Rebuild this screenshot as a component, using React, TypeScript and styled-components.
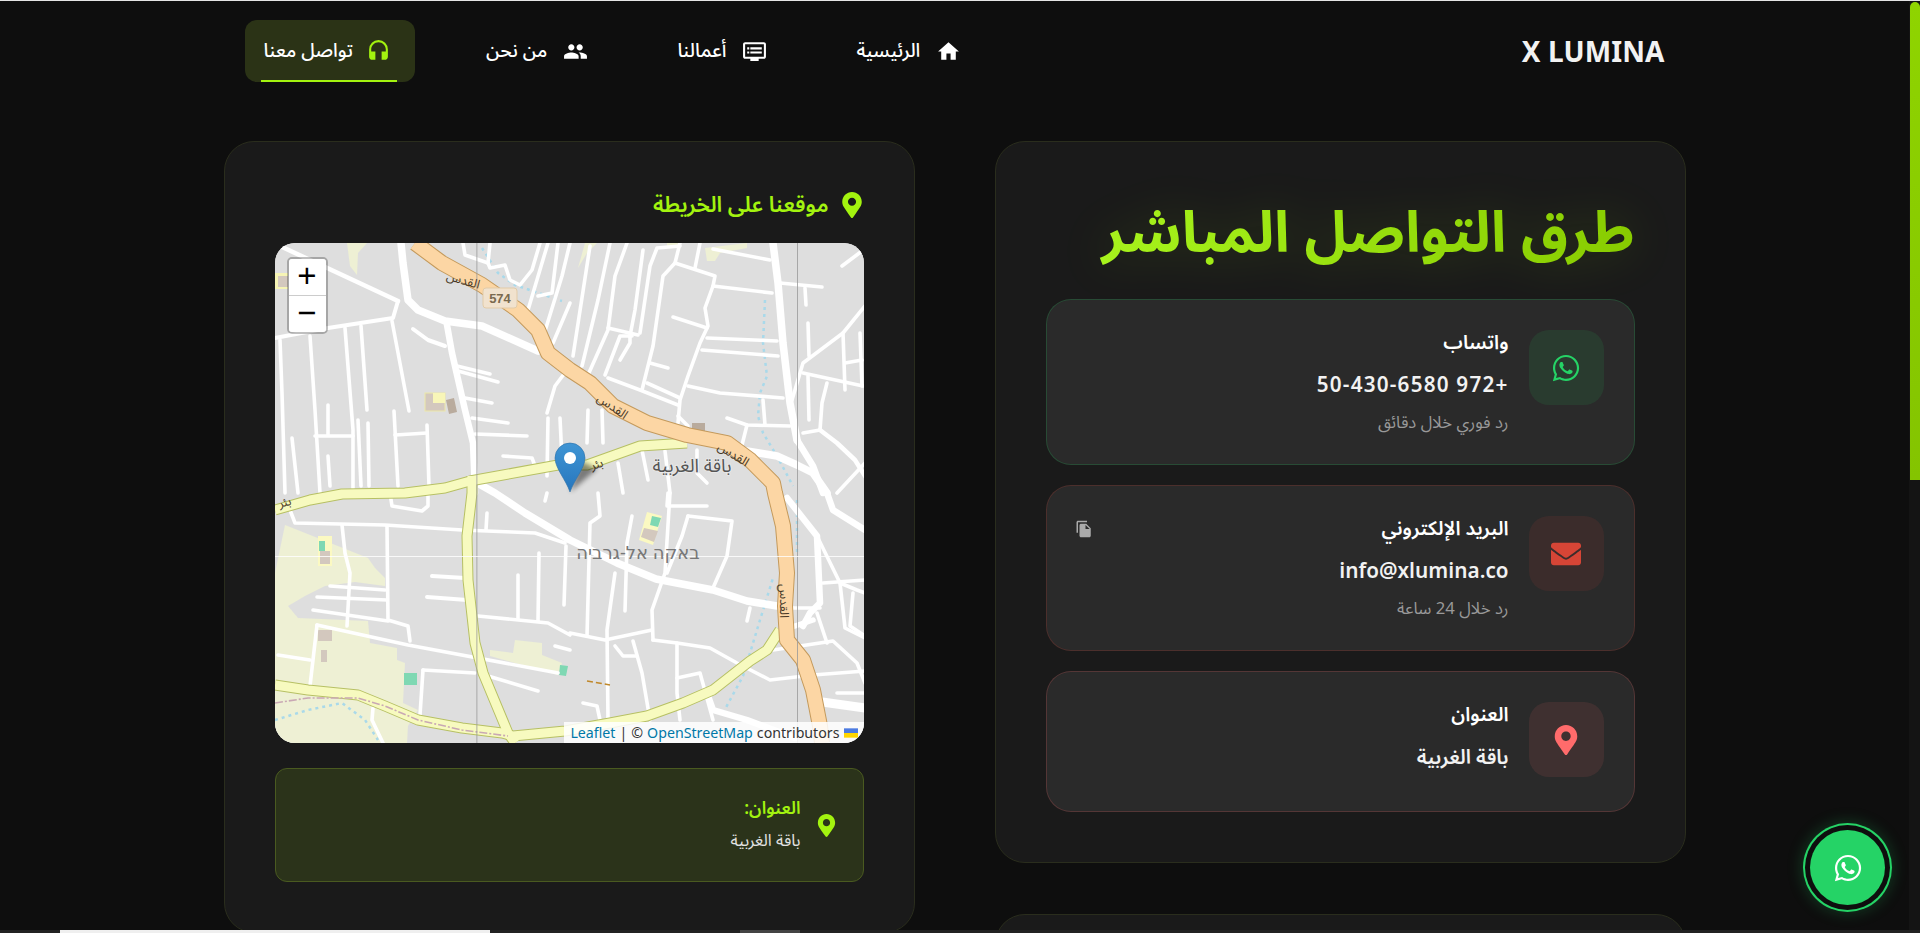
import { ReactNode } from "react";
import styled, { createGlobalStyle } from "styled-components";
import {
  MdHome,
  MdDvr,
  MdPeople,
  MdHeadset,
  MdFileCopy,
} from "react-icons/md";
import { FaWhatsapp, FaEnvelope, FaMapMarkerAlt } from "react-icons/fa";

const LIME = "#a3f30f";
const FONT = `"Noto Sans Arabic", "IBM Plex Sans Arabic", "Noto Sans", "DejaVu Sans", sans-serif`;

const GlobalStyle = createGlobalStyle`
  html, body {
    margin: 0;
    height: 100%;
    overflow: hidden;
    background: #0e0e0e;
  }
  * {
    box-sizing: border-box;
  }
`;

const Frame = styled.div`
  position: relative;
  height: 933px;
  display: flex;
  flex-direction: column;
  overflow: hidden;
  background: #0e0e0e;
  color: #fff;
  font-family: ${FONT};
`;

const TopLine = styled.div`
  height: 1px;
  flex: none;
  background: #e4e4e4;
`;

const Middle = styled.div`
  flex: 1;
  min-height: 0;
  display: flex;
  direction: ltr;
`;

const Page = styled.div`
  flex: 1;
  min-width: 0;
  overflow: hidden;
  direction: rtl;
`;

const Wrap = styled.div`
  width: 1462px;
  margin: 0 auto;
`;

const ScrollTrack = styled.div`
  width: 11px;
  flex: none;
  background: #141414;
  padding-top: 1px;
`;

const ScrollThumb = styled.div`
  width: 10px;
  height: 478px;
  margin-left: 1px;
  border-radius: 5px 5px 0 0;
  background: linear-gradient(180deg, #8fd400, #84c400);
`;

const BottomBar = styled.div`
  height: 3px;
  flex: none;
  display: flex;
  background: #222;
  direction: ltr;
`;

const BarPiece = styled.div<{ $left: number; $width: number; $color: string }>`
  margin-left: ${(p) => p.$left}px;
  width: ${(p) => p.$width}px;
  background: ${(p) => p.$color};
`;

const Header = styled.header`
  display: flex;
  align-items: center;
  justify-content: space-between;
  padding: 19px 21px;
  margin-bottom: 40px;
`;

const Logo = styled.div`
  font-family: "Noto Sans", sans-serif;
  font-size: 28px;
  font-weight: 700;
  letter-spacing: 0.1px;
  color: #f2f2f2;
  direction: ltr;
`;

const Nav = styled.nav`
  display: flex;
  gap: 44px;
`;

const NavItem = styled.a<{ $active?: boolean }>`
  position: relative;
  height: 62px;
  display: flex;
  align-items: center;
  gap: ${(p) => (p.$active ? 13 : 16)}px;
  padding: 0 ${(p) => (p.$active ? 24 : 28)}px 0 ${(p) => (p.$active ? 19 : 17)}px;
  margin-right: ${(p) => (p.$active ? 10 : 0)}px;
  border-radius: 12px;
  font-size: 19px;
  font-weight: 500;
  color: #fff;
  background: ${(p) => (p.$active ? "#2b3316" : "transparent")};
  svg {
    font-size: 25px;
    color: ${(p) => (p.$active ? LIME : "#fff")};
  }
  ${(p) =>
    p.$active &&
    `&::after {
      content: "";
      position: absolute;
      left: 16px;
      right: 18px;
      bottom: 0;
      height: 2px;
      background: ${LIME};
    }`}
`;

const Columns = styled.main`
  display: grid;
  grid-template-columns: 691px 691px;
  justify-content: space-between;
  align-items: start;
`;

const Panel = styled.section`
  background: #1a1a1a;
  border: 1px solid #2a2d1d;
  border-radius: 30px;
  padding: 50px;
`;

const RightStack = styled.div`
  display: flex;
  flex-direction: column;
  gap: 51px;
`;

const MainTitle = styled.h1`
  margin: 0 0 23px;
  font-size: 57px;
  line-height: 84px;
  font-weight: 700;
  background: linear-gradient(90deg, #aaf71f, #88cc00);
  -webkit-background-clip: text;
  background-clip: text;
  color: transparent;
  filter: drop-shadow(0 0 24px rgba(163, 243, 15, 0.16));
`;

const ContactList = styled.div`
  display: flex;
  flex-direction: column;
  gap: 20px;
`;

const ContactCard = styled.div<{ $color: string }>`
  position: relative;
  display: flex;
  align-items: flex-start;
  gap: 20px;
  padding: 30px;
  background: #2a2a2a;
  border: 1px solid ${(p) => p.$color}33;
  border-radius: 25px;
`;

const IconBox = styled.div<{ $color: string }>`
  width: 75px;
  height: 75px;
  flex: none;
  display: flex;
  align-items: center;
  justify-content: center;
  border-radius: 20px;
  background: ${(p) => p.$color}1a;
  color: ${(p) => p.$color};
  font-size: 30px;
`;

const CardText = styled.div`
  display: flex;
  flex-direction: column;
`;

const CardTitle = styled.div`
  font-size: 19.5px;
  line-height: 26px;
  font-weight: 600;
  color: #fff;
  margin-bottom: 15px;
`;

const CardValue = styled.div<{ $latin?: boolean; $tracking?: number }>`
  font-size: ${(p) => (p.$latin ? 20.7 : 20)}px;
  line-height: 30px;
  font-weight: 600;
  letter-spacing: ${(p) => p.$tracking ?? 0}px;
  color: #f2f2f2;
  margin-bottom: 10px;
  &:last-child {
    margin-bottom: 8px;
  }
`;

const CardNote = styled.div`
  font-size: 16.7px;
  line-height: 23px;
  color: #999;
`;

const CopyButton = styled.span`
  position: absolute;
  left: 28px;
  top: 34px;
  display: flex;
  font-size: 18px;
  color: #aaa;
`;

const SectionTitle = styled.h2`
  margin: 0 0 26px;
  display: flex;
  align-items: center;
  gap: 10px;
  height: 25px;
  font-size: 21.6px;
  font-weight: 600;
  color: ${LIME};
  svg {
    font-size: 26px;
    margin-right: -1px;
  }
`;

const MapBox = styled.div`
  position: relative;
  height: 500px;
  border-radius: 20px;
  overflow: hidden;
  background: #dedede;
  direction: ltr;
`;

const MapSvg = styled.svg`
  display: block;
  width: 100%;
  height: 100%;
`;

const ZoomControl = styled.div`
  position: absolute;
  left: 12px;
  top: 14px;
  width: 41px;
  display: flex;
  flex-direction: column;
  border: 2px solid rgba(0, 0, 0, 0.25);
  border-radius: 5px;
  background-clip: padding-box;
`;

const ZoomButton = styled.a`
  height: 36px;
  display: flex;
  align-items: center;
  justify-content: center;
  padding-top: 3px;
  background: #fff;
  color: #000;
  font-family: "Liberation Mono", monospace;
  font-size: 33px;
  font-weight: 400;
  line-height: 33px;
  &:first-child {
    border-bottom: 1px solid #ccc;
    border-radius: 3px 3px 0 0;
    height: 37px;
  }
  &:last-child {
    border-radius: 0 0 3px 3px;
  }
`;

const Attribution = styled.div`
  position: absolute;
  right: 0;
  bottom: 0;
  height: 21px;
  display: flex;
  align-items: center;
  gap: 4px;
  padding: 0 6px;
  background: rgba(255, 255, 255, 0.85);
  font-family: "Noto Sans", sans-serif;
  font-size: 14.2px;
  color: #333;
  white-space: nowrap;
`;

const AttrLink = styled.a`
  color: #0078a8;
`;

const Flag = styled.svg`
  width: 14px;
  height: 10px;
`;

const AddressBox = styled.div`
  margin-top: 25px;
  height: 114px;
  display: flex;
  align-items: center;
  gap: 14px;
  padding: 0 25px;
  background: #2b331a;
  border: 1px solid #4a5a20;
  border-radius: 12px;
  > svg {
    font-size: 23px;
    color: ${LIME};
  }
`;

const AddressLabel = styled.div`
  font-size: 17.5px;
  line-height: 24px;
  font-weight: 600;
  color: ${LIME};
  margin-bottom: 8px;
`;

const AddressText = styled.div`
  font-size: 16.4px;
  line-height: 24px;
  color: #e2e2e2;
`;

const FloatButton = styled.a`
  position: absolute;
  left: 1810px;
  top: 830px;
  width: 75px;
  height: 75px;
  display: flex;
  align-items: center;
  justify-content: center;
  border-radius: 50%;
  background: #25d366;
  color: #fff;
  font-size: 30px;
  box-shadow: 0 0 0 5px #0e0e0e, 0 0 0 7px #25d366, 0 0 16px 7px rgba(37, 211, 102, 0.25);
`;

// map traced from the tile picture, coordinates are inside the 589x500 box
type Road = [number, string];

const areas: string[] = [
  "0,330 10,282 93,315 100,325 110,335 110,343 80,339 50,343 30,353 13,363 23,375 93,378 95,400 122,405 122,417 130,420 128,460 143,467 133,483 132,500 0,500",
  "215,407 238,410 240,397 267,400 267,412 287,420 283,432 215,413",
  "72,0 92,0 83,10 82,32 75,23",
  "430,5 472,0 472,5 445,10 440,18 432,18",
  "392,0 405,0 405,5 392,3",
  "303,25 310,0 322,0 312,10",
];

const whiteRoads: Road[] = [
  [7.5, "126,0 128,20 133,57 143,67 170,78 207,83 263,108"],
  [4.5, "5,3 123,58"],
  [4, "0,95 53,85 118,75 123,58"],
  [3.6, "117,78 134,168"],
  [6.5, "172,82 177,110 190,167 198,200 200,250"],
  [4, "138,86 153,97 170,103"],
  [3.6, "182,123 215,131"],
  [3.6, "183,128 223,139"],
  [3.6, "190,155 217,160"],
  [3.6, "197,175 233,180"],
  [3.6, "200,191 252,193"],
  [3.6, "5,97 7,150 10,250"],
  [3.6, "35,93 40,167 45,250"],
  [3.6, "70,85 78,187 78,245"],
  [3.6, "86,83 92,167"],
  [3.6, "53,162 53,192"],
  [3.6, "40,193 78,193"],
  [3.6, "83,177 86,243"],
  [3.6, "93,180 94,243"],
  [3.6, "119,168 123,243"],
  [3.6, "120,192 152,190"],
  [3.6, "152,182 154,243"],
  [3.6, "17,195 23,250"],
  [3.6, "53,213 55,243"],
  [3.6, "228,213 257,215 260,223"],
  [3.6, "273,175 272,233"],
  [3.6, "285,175 287,217"],
  [3.6, "272,170 280,143 295,123"],
  [3.6, "188,0 190,12 213,20 215,25 230,22 235,37 245,42 257,27 265,0"],
  [3.6, "215,0 213,20"],
  [3.6, "253,67 267,20 273,0"],
  [3.6, "263,53 277,50 283,0"],
  [3.6, "270,88 287,33 295,0"],
  [3.6, "278,100 295,60"],
  [3.6, "298,113 315,3"],
  [3.6, "307,123 323,57 335,0"],
  [3.6, "313,132 333,87 340,33 352,0"],
  [3.6, "355,93 360,67 368,7"],
  [3.6, "365,90 375,23 382,5 405,3"],
  [3.6, "333,85 363,92"],
  [3.6, "330,132 345,93 357,93"],
  [3.6, "345,117 355,100 355,93"],
  [3.6, "333,135 365,147 403,162"],
  [3.6, "367,147 378,103 388,33 400,20 440,33 438,43 430,65 433,83 425,100 413,133 405,157 403,180"],
  [3.6, "400,20 405,0"],
  [3.6, "420,25 425,0"],
  [3.6, "438,43 497,50"],
  [3.6, "398,74 432,85"],
  [3.6, "432,95 502,98"],
  [3.6, "427,107 503,113"],
  [3.6, "375,120 393,125"],
  [3.6, "372,140 405,155"],
  [3.6, "413,143 445,150 508,155"],
  [7.5, "498,0 503,40 508,100 515,160 522,197"],
  [3.6, "438,6 495,17"],
  [3.6, "505,40 547,44"],
  [3.6, "530,45 531,62"],
  [3.6, "567,23 587,8"],
  [3.6, "533,80 534,113"],
  [3.6, "517,157 528,120 568,90 590,63"],
  [3.6, "568,90 570,147"],
  [3.6, "570,120 587,117"],
  [3.6, "585,90 587,143"],
  [3.6, "528,130 588,143"],
  [3.6, "533,133 534,177"],
  [3.6, "552,140 547,160 545,187 528,190"],
  [4.5, "545,187 562,200 580,217 590,233"],
  [3.6, "562,250 590,220"],
  [3.6, "452,175 472,182 515,183"],
  [3.6, "488,157 490,182"],
  [3.6, "472,182 467,202"],
  [7.5, "472,208 502,213 522,222 538,230 552,250"],
  [6.5, "522,197 538,223 548,250"],
  [3.6, "403,173 413,183"],
  [3.6, "422,207 422,230 432,240"],
  [3.6, "390,208 395,250"],
  [3.6, "367,207 373,237"],
  [3.6, "343,220 348,250"],
  [3.6, "327,167 328,200"],
  [3.6, "313,167 312,200"],
  [3.6, "115,250 117,263 147,268 153,263 153,250"],
  [3.6, "15,267 20,280 110,282 187,287 260,290 290,300"],
  [3.6, "212,270 211,287"],
  [3.6, "67,282 70,310 75,330 72,383"],
  [3.6, "112,283 113,377 133,383 135,398"],
  [3.6, "55,343 110,347"],
  [3.6, "42,354 112,357"],
  [3.6, "38,367 113,378"],
  [3.6, "42,382 133,402 283,430"],
  [3.6, "42,382 35,443"],
  [3.6, "3,412 35,417"],
  [3.6, "148,427 200,430"],
  [3.6, "148,427 145,472"],
  [3.6, "213,433 263,448"],
  [4, "157,333 190,335"],
  [4, "152,354 192,357"],
  [3.6, "203,373 273,380 295,392"],
  [3.6, "243,332 243,375"],
  [3.6, "264,310 263,378"],
  [3.6, "280,403 295,407"],
  [3.6, "291,303 289,362"],
  [3.6, "98,465 97,477 108,500"],
  [7.5, "197,237 220,250 250,270 295,297 342,320 381,336 438,347 472,358 502,363"],
  [3.6, "515,365 545,365"],
  [3.6, "272,250 270,258"],
  [3.6, "393,250 392,263 432,263"],
  [3.6, "323,250 325,273 315,280 312,393"],
  [3.6, "357,273 352,300 350,368"],
  [3.6, "395,250 390,330 377,367 378,397"],
  [3.6, "413,273 457,278 452,313 438,345"],
  [3.6, "413,273 407,293 392,330"],
  [3.6, "340,330 332,387 333,477"],
  [3.6, "295,390 330,397 377,387"],
  [3.6, "340,403 348,413 362,413"],
  [3.6, "358,398 367,430 375,477"],
  [3.6, "378,397 402,400 435,405 462,420 495,437 538,432 590,428"],
  [3.6, "402,400 402,450 405,477"],
  [3.6, "402,435 425,430 438,477"],
  [3.6, "475,365 472,378"],
  [3.6, "498,407 525,403 558,398 582,420 590,440"],
  [9, "540,458 590,465"],
  [6.5, "432,450 438,467 472,477 520,495"],
  [3.6, "308,460 322,463 325,477"],
  [6.5, "512,255 542,293 545,360 535,370 528,383"],
  [6.5, "552,250 558,267 590,287"],
  [3.6, "542,293 565,340 582,347 590,350"],
  [3.6, "565,340 570,385 590,395"],
  [3.6, "548,340 590,337"],
  [3.6, "578,350 575,383 590,393"],
  [3.6, "542,370 552,400"],
  [3.6, "562,450 590,450"],
  [5.5, "508,387 538,377"],
];

const orangeRoad =
  "140,0 167,20 207,42 243,67 263,87 273,110 295,127 315,140 338,163 372,180 412,192 452,200 475,217 498,240 500,250 508,283 512,330 510,363 512,397 528,417 538,447 545,483 547,500";

const yellowRoads: string[] = [
  "0,267 35,257 67,251 130,250 170,245 195,238 283,222 312,222 365,203 412,200",
  "197,233 197,250 192,293 193,337 200,400 208,430 233,490 240,500",
  "0,442 33,447 83,452 110,463 143,477 187,485 227,490 238,493 290,488 335,480 372,473 408,460 438,447 475,418 492,407 505,387",
];

const streams: string[] = [
  "490,57 488,100 492,133 485,150 483,173 488,190 502,213 518,243",
  "207,5 223,30 240,42 287,58",
  "0,477 33,467 67,460 90,477 103,497",
  "448,470 468,433 485,377 498,335",
  "522,257 522,313",
];

const roadLabels: [string, number, number, number][] = [
  ["القدس", 188, 38, 16],
  ["القدس", 337, 164, 35],
  ["القدس", 458, 212, 32],
  ["القدس", 508, 358, 90],
  ["بئر", 10, 260, -15],
  ["بئر", 322, 222, -17],
];

function MapPicture() {
  return (
    <MapSvg viewBox="0 0 589 500">
      <defs>
        <linearGradient id="pin" x1="0" y1="0" x2="0" y2="1">
          <stop offset="0" stopColor="#3f95d4" />
          <stop offset="1" stopColor="#2776bd" />
        </linearGradient>
        <filter id="soft" x="-30%" y="-30%" width="160%" height="160%">
          <feGaussianBlur stdDeviation="2.5" />
        </filter>
        <filter id="tile">
          <feGaussianBlur stdDeviation="0.35" />
        </filter>
      </defs>
      <rect width="589" height="500" fill="#dedede" />
      <g filter="url(#tile)">
        {areas.map((pts) => (
          <polygon key={pts} points={pts} fill="#eef0d4" />
        ))}
        <g fill="none" strokeDasharray="3 4" strokeWidth="2.5" stroke="#a9d9ea">
          {streams.map((pts) => (
            <polyline key={pts} points={pts} />
          ))}
        </g>
        <g fill="#d3c8be">
          <rect x="150" y="150" width="20" height="18" stroke="#eee9a8" />
          <rect x="158" y="150" width="12" height="10" fill="#f8f6b8" />
          <polygon points="171,157 179,155 182,169 174,171" fill="#b9ab9d" />
          <rect x="0" y="30" width="13" height="16" fill="#f6f4b5" />
          <rect x="3" y="33" width="10" height="11" />
          <rect x="417" y="180" width="13" height="9" fill="#b9ab9d" />
          <rect x="43" y="293" width="14" height="30" fill="#fbf9c2" />
          <rect x="44" y="298" width="6" height="10" fill="#7fd8b3" />
          <rect x="45" y="308" width="10" height="13" />
          <rect x="43" y="387" width="14" height="11" />
          <rect x="46" y="407" width="6" height="12" />
          <rect x="129" y="430" width="13" height="12" fill="#7fd8b3" />
          <polygon points="285,422 293,423 291,433 284,432" fill="#7fd8b3" />
          <polygon points="372,269 387,273 378,302 364,297" fill="#fbf9c2" />
          <polygon points="377,273 386,275 383,284 375,282" fill="#7fd8b3" />
          <polygon points="369,285 383,288 379,299 366,294" />
        </g>
        <g fill="none" stroke="#fff" strokeLinecap="round" strokeLinejoin="round">
          {whiteRoads.map(([w, pts]) => (
            <polyline key={pts} points={pts} strokeWidth={w} />
          ))}
        </g>
        <g fill="none" strokeLinejoin="round">
          {yellowRoads.map((pts) => (
            <polyline key={pts} points={pts} stroke="#b7c064" strokeWidth="11" />
          ))}
          {yellowRoads.map((pts) => (
            <polyline key={pts} points={pts} stroke="#f7fabf" strokeWidth="9" />
          ))}
          <polyline
            points="0,460 33,455 83,455 110,463 143,477 187,487 233,493"
            stroke="#c9a8b4"
            strokeWidth="1.6"
            strokeDasharray="8 2 2 2"
          />
          <polyline points={orangeRoad} stroke="#c49a5c" strokeWidth="16" />
          <polyline points={orangeRoad} stroke="#fcd6a4" strokeWidth="14" />
          <polyline points="312,438 335,442" stroke="#c0882a" strokeWidth="1.6" strokeDasharray="6 3" />
        </g>
      </g>
      <rect x="201.5" width="0.8" height="500" fill="#999" />
      <rect x="522" width="0.8" height="500" fill="#999" />
      <rect y="313" width="589" height="0.8" fill="#fff" />

      <rect x="208" y="45" width="34" height="20" rx="3" fill="#f1e2ce" stroke="#e2cba8" />
      <text x="225" y="60" textAnchor="middle" fontFamily="Liberation Sans, sans-serif" fontSize="13" fontWeight="700" fill="#7a6a50">
        574
      </text>
      {roadLabels.map(([label, x, y, angle]) => (
        <text
          key={`${x}-${y}`}
          x={x}
          y={y}
          textAnchor="middle"
          dominantBaseline="middle"
          fontFamily={FONT}
          fontSize="12.5"
          fill="#4a3a28"
          transform={`rotate(${angle} ${x} ${y})`}
        >
          {label}
        </text>
      ))}
      <text x="417" y="229" textAnchor="middle" fontFamily={FONT} fontSize="18.5" fill="#555" stroke="#e8e8e8" strokeWidth="2" paintOrder="stroke">
        باقة الغربية
      </text>
      <text x="363" y="316" textAnchor="middle" fontFamily={FONT} fontSize="18" fill="#777">
        באקה אל-גרביה
      </text>

      <polygon points="295,249 322,226 306,218" fill="#000" opacity="0.45" filter="url(#soft)" />
      <path
        d="M295 249 C291 237 280 225 280 215 A15 15 0 0 1 310 215 C310 225 299 237 295 249 Z"
        fill="url(#pin)"
        stroke="#2a6ea8"
        strokeWidth="0.6"
      />
      <circle cx="295" cy="215" r="6" fill="#fff" />
    </MapSvg>
  );
}

interface ContactProps {
  color: string;
  icon: ReactNode;
  title: string;
  value: string;
  note?: string;
  copy?: boolean;
  latin?: boolean;
  tracking?: number;
}

function Contact({ color, icon, title, value, note, copy, latin, tracking }: ContactProps) {
  return (
    <ContactCard $color={color}>
      <IconBox $color={color}>{icon}</IconBox>
      <CardText>
        <CardTitle>{title}</CardTitle>
        <CardValue $latin={latin} $tracking={tracking}>
          {value}
        </CardValue>
        {note && <CardNote>{note}</CardNote>}
      </CardText>
      {copy && (
        <CopyButton>
          <MdFileCopy />
        </CopyButton>
      )}
    </ContactCard>
  );
}

export default function App() {
  return (
    <Frame dir="rtl">
      <GlobalStyle />
      <TopLine />
      <Middle>
        <Page>
          <Wrap>
            <Header>
              <Logo>X LUMINA</Logo>
              <Nav>
                <NavItem>
                  <MdHome />
                  الرئيسية
                </NavItem>
                <NavItem>
                  <MdDvr />
                  أعمالنا
                </NavItem>
                <NavItem>
                  <MdPeople />
                  من نحن
                </NavItem>
                <NavItem $active>
                  <MdHeadset />
                  تواصل معنا
                </NavItem>
              </Nav>
            </Header>
            <Columns>
              <RightStack>
                <Panel>
                  <MainTitle>طرق التواصل المباشر</MainTitle>
                  <ContactList>
                    <Contact
                      color="#25d366"
                      icon={<FaWhatsapp />}
                      title="واتساب"
                      value="+972 50-430-6580"
                      note="رد فوري خلال دقائق"
                      latin
                      tracking={1.2}
                    />
                    <Contact
                      color="#d64536"
                      icon={<FaEnvelope />}
                      title="البريد الإلكتروني"
                      value="info@xlumina.co"
                      note="رد خلال 24 ساعة"
                      latin
                      copy
                    />
                    <Contact
                      color="#ff6b6b"
                      icon={<FaMapMarkerAlt />}
                      title="العنوان"
                      value="باقة الغربية"
                    />
                  </ContactList>
                </Panel>
                <Panel />
              </RightStack>
              <Panel>
                <SectionTitle>
                  <FaMapMarkerAlt />
                  موقعنا على الخريطة
                </SectionTitle>
                <MapBox>
                  <MapPicture />
                  <ZoomControl>
                    <ZoomButton>+</ZoomButton>
                    <ZoomButton>−</ZoomButton>
                  </ZoomControl>
                  <Attribution>
                    <AttrLink>Leaflet</AttrLink>
                    <span>|</span>
                    <span>©</span>
                    <AttrLink>OpenStreetMap</AttrLink>
                    <span>contributors</span>
                    <Flag viewBox="0 0 12 8">
                      <rect width="12" height="4" fill="#4c7be1" />
                      <rect y="4" width="12" height="4" fill="#ffd500" />
                    </Flag>
                  </Attribution>
                </MapBox>
                <AddressBox>
                  <FaMapMarkerAlt />
                  <div>
                    <AddressLabel>العنوان:</AddressLabel>
                    <AddressText>باقة الغربية</AddressText>
                  </div>
                </AddressBox>
              </Panel>
            </Columns>
          </Wrap>
        </Page>
        <ScrollTrack>
          <ScrollThumb />
        </ScrollTrack>
      </Middle>
      <BottomBar>
        <BarPiece $left={60} $width={430} $color="#efefef" />
        <BarPiece $left={250} $width={60} $color="#444" />
      </BottomBar>
      <FloatButton>
        <FaWhatsapp />
      </FloatButton>
    </Frame>
  );
}
